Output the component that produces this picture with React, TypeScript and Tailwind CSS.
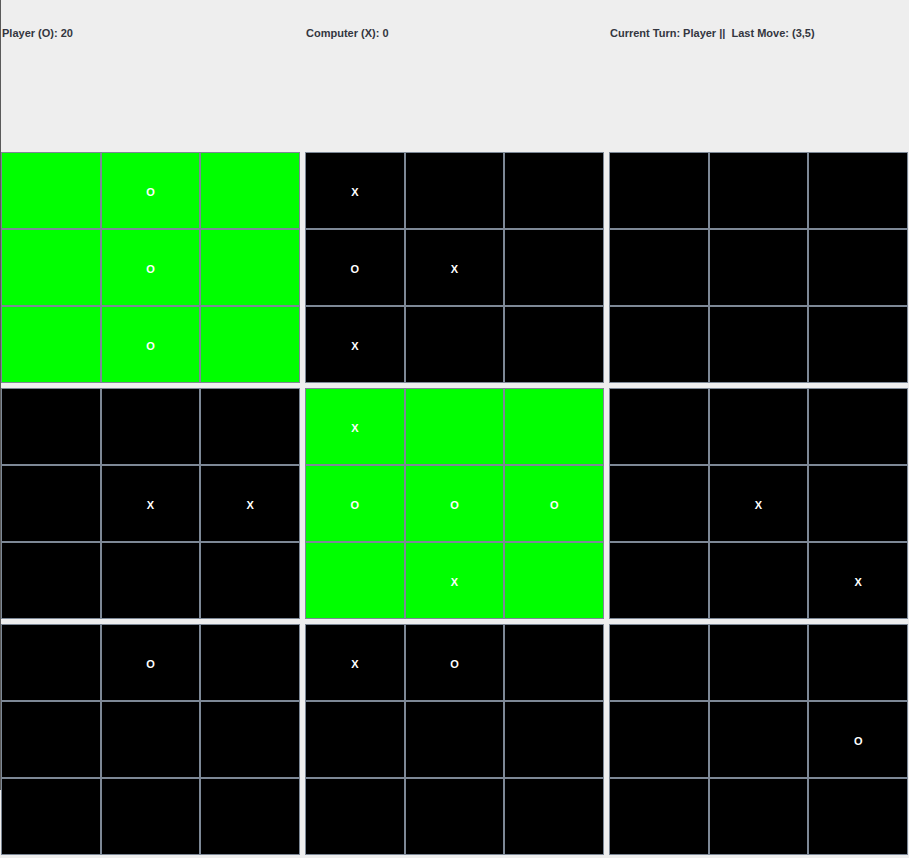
import React from "react";

const boards: { green: boolean; cells: string[] }[] = [
  { green: true, cells: ["", "O", "", "", "O", "", "", "O", ""] },
  { green: false, cells: ["X", "", "", "O", "X", "", "X", "", ""] },
  { green: false, cells: ["", "", "", "", "", "", "", "", ""] },
  { green: false, cells: ["", "", "", "", "X", "X", "", "", ""] },
  { green: true, cells: ["X", "", "", "O", "O", "O", "", "X", ""] },
  { green: false, cells: ["", "", "", "", "X", "", "", "", "X"] },
  { green: false, cells: ["", "O", "", "", "", "", "", "", ""] },
  { green: false, cells: ["X", "O", "", "", "", "", "", "", ""] },
  { green: false, cells: ["", "", "", "", "", "O", "", "", ""] },
];

export default function App() {
  return (
    <div
      className="w-[909px] h-[858px] bg-[#eeeeee] overflow-hidden relative"
      style={{ fontFamily: '"Liberation Sans", Arial, sans-serif' }}
    >
      <div className="absolute left-0 top-0 w-px h-[790px] bg-[#5a5a5a]" />
      <div className="grid grid-cols-3 gap-[5px] h-[152px] pl-[2px] pt-[25px] text-[11px] font-bold text-[#333640]">
        <div>Player (O): 20</div>
        <div>Computer (X): 0</div>
        <div className="whitespace-pre">Current Turn: Player ||  Last Move: (3,5)</div>
      </div>
      <div className="grid grid-cols-3 grid-rows-[231px_231px_231px] gap-[5px] pl-px pr-px">
        {boards.map((b, i) => (
          <div
            key={i}
            className={`grid grid-cols-3 grid-rows-3 ${b.green ? "bg-[#00ff00]" : "bg-black"}`}
          >
            {b.cells.map((c, j) => (
              <div
                key={j}
                className="flex items-center justify-center border border-[#7d8896] text-white text-[11px] font-bold pt-[3px]"
              >
                {c}
              </div>
            ))}
          </div>
        ))}
      </div>
    </div>
  );
}
